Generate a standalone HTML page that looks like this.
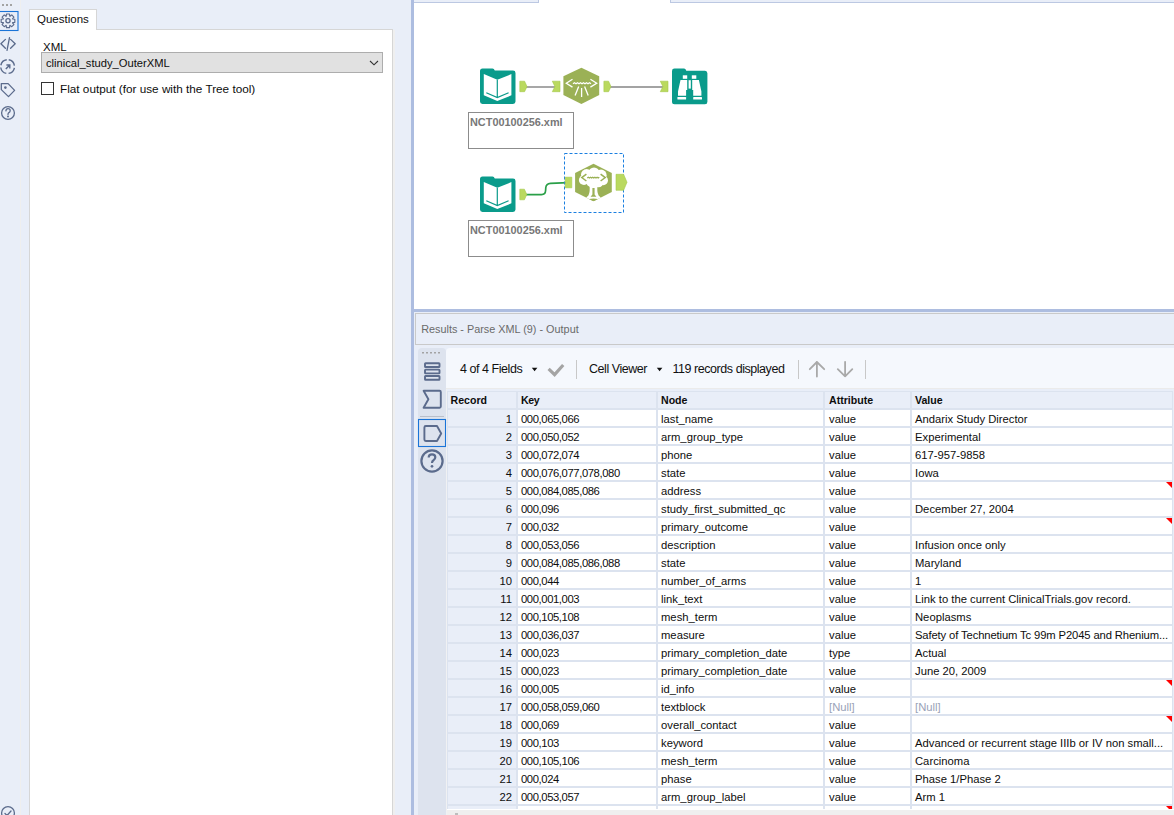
<!DOCTYPE html>
<html><head><meta charset="utf-8">
<style>
*{margin:0;padding:0;box-sizing:border-box}
html,body{width:1174px;height:815px;overflow:hidden;background:#e9eef8;font-family:"Liberation Sans",sans-serif;color:#0d0d0d}
.a{position:absolute}
.ic{position:absolute;overflow:visible}
/* left */
#lsep{left:20px;top:0;width:1px;height:815px;background:#efefef}
#panel{left:29px;top:29px;width:364px;height:800px;background:#fff;border:1px solid #d6d6d6}
#tab{left:29px;top:9px;width:68px;height:21px;background:#fff;border:1px solid #d6d6d6;border-bottom:none;font-size:11.5px;padding:3px 0 0 7px}
#xmllbl{left:43px;top:40.5px;font-size:11.5px}
#dd{left:41px;top:52px;width:342px;height:21px;background:#e1e1e1;border:1px solid #adadad;font-size:11.2px;padding:4px 0 0 4px}
#cb{left:41px;top:82px;width:13px;height:13px;border:1px solid #333;background:#fff}
#cbl{left:60px;top:82px;font-size:11.75px}
#vbar{left:411px;top:0;width:3px;height:815px;background:#adbde0}
/* canvas */
#canvas{left:414px;top:0;width:760px;height:309px;background:#fff}
#tabstrip{left:414px;top:0;width:760px;height:3px;background:#e9eef8;border-bottom:1px solid #bcc8e2}
#acttab{left:538px;top:0;width:133px;height:3px;background:#fff;border-left:1px solid #bcc8e2;border-right:1px solid #bcc8e2}
#hbar{left:414px;top:309px;width:760px;height:3px;background:#adbde0}
/* results */
#res{left:414px;top:312px;width:760px;height:503px;background:#e9eef8}
#reshdr{left:415px;top:313px;width:770px;height:32px;border:1px solid #c9c9c9;background:#e9eef8;font-size:10.85px;color:#6a6a6a;padding:9.2px 0 0 5.2px}
#side{left:418px;top:348px;width:28px;height:470px;background:#dde3ee;border-radius:4px 4px 0 0}
#tb{left:446px;top:348px;width:728px;height:41px;background:#f5f8fd;border-radius:4px 0 0 0;border-bottom:1px solid #ebebeb}
.tbt{position:absolute;font-size:12.5px;letter-spacing:-0.45px;top:361.5px;color:#111}
.sep{position:absolute;width:1px;background:#c8c8c8}
/* table */
#grid{left:447px;top:391px;width:726px;height:419px;background:#dce3ef}
.row{position:absolute;left:447px;width:725px;height:16px}
.c{position:absolute;top:0;height:16px;background:#fff;font-size:11.25px;line-height:16px;padding-top:1px;white-space:nowrap;overflow:hidden}
.hd .c{background:#e9eef8;font-weight:bold;font-size:10.6px;height:16px;line-height:16px;padding-top:0}
.c0{left:1px;width:68px;background:#e9eef8!important;text-align:right;padding-right:4px}
.c1{left:71px;width:138px;padding-left:3px;letter-spacing:-0.4px}
.c2{left:211px;width:165px;padding-left:3px}
.c3{left:378px;width:85px;padding-left:4px}
.c4{left:465px;width:260px;padding-left:3px}
.hd .c0{text-align:left;padding-left:2.5px}
.nul{color:#9aa3b8}
.red{position:absolute;right:0;top:0;width:0;height:0;border-top:6px solid #f00;border-left:6px solid transparent}
#scroll{left:447px;top:808.5px;width:727px;height:7px;background:#efefef;border-top:1.5px solid #fff}
.lbl{position:absolute;width:106px;height:37px;border:1px solid #8c8c8c;background:#fff;font-weight:bold;font-size:10.9px;color:#777;padding:3px 0 0 1px}
</style></head><body>
<!-- left icon column -->
<div class="a" id="lsep"></div>
<div class="a" id="panel"></div>
<div class="a" id="tab">Questions</div>
<div class="a" id="xmllbl">XML</div>
<div class="a" id="dd">clinical_study_OuterXML</div>
<div class="a" id="cb"></div>
<div class="a" id="cbl">Flat output (for use with the Tree tool)</div>
<div class="a" style="left:393px;top:30px;width:2px;height:785px;background:#efefef"></div>
<div class="a" id="vbar"></div>

<div class="a" id="canvas"></div>
<div class="a" id="tabstrip"></div>
<div class="a" id="acttab"></div>
<div class="a" id="hbar"></div>

<div class="a" id="res"></div>
<div class="a" id="reshdr">Results - Parse XML (9) - Output</div>
<div class="a" id="side"></div>
<div class="a" id="tb"></div>
<div class="tbt" style="left:460px">4 of 4 Fields</div>
<div class="tbt" style="left:589px">Cell Viewer</div>
<div class="tbt" style="left:672.5px">119 records displayed</div>
<div class="sep" style="left:576px;top:360px;height:19px"></div>
<div class="sep" style="left:798px;top:360px;height:19px"></div>
<div class="sep" style="left:865px;top:360px;height:19px"></div>

<div class="a" style="left:446px;top:389px;width:1px;height:426px;background:#f0f1f3"></div>
<div class="a" id="grid"></div>
<div id="rows">
<div class="row hd" style="top:392px"><div class="c c0">Record</div><div class="c c1">Key</div><div class="c c2">Node</div><div class="c c3">Attribute</div><div class="c c4">Value</div></div>
<div class="row" style="top:410px"><div class="c c0">1</div><div class="c c1">000,065,066</div><div class="c c2">last_name</div><div class="c c3">value</div><div class="c c4">Andarix Study Director</div></div>
<div class="row" style="top:428px"><div class="c c0">2</div><div class="c c1">000,050,052</div><div class="c c2">arm_group_type</div><div class="c c3">value</div><div class="c c4">Experimental</div></div>
<div class="row" style="top:446px"><div class="c c0">3</div><div class="c c1">000,072,074</div><div class="c c2">phone</div><div class="c c3">value</div><div class="c c4">617-957-9858</div></div>
<div class="row" style="top:464px"><div class="c c0">4</div><div class="c c1">000,076,077,078,080</div><div class="c c2">state</div><div class="c c3">value</div><div class="c c4">Iowa</div></div>
<div class="row" style="top:482px"><div class="c c0">5</div><div class="c c1">000,084,085,086</div><div class="c c2">address</div><div class="c c3">value</div><div class="c c4"><div class="red"></div></div></div>
<div class="row" style="top:500px"><div class="c c0">6</div><div class="c c1">000,096</div><div class="c c2">study_first_submitted_qc</div><div class="c c3">value</div><div class="c c4">December 27, 2004</div></div>
<div class="row" style="top:518px"><div class="c c0">7</div><div class="c c1">000,032</div><div class="c c2">primary_outcome</div><div class="c c3">value</div><div class="c c4"><div class="red"></div></div></div>
<div class="row" style="top:536px"><div class="c c0">8</div><div class="c c1">000,053,056</div><div class="c c2">description</div><div class="c c3">value</div><div class="c c4">Infusion once only</div></div>
<div class="row" style="top:554px"><div class="c c0">9</div><div class="c c1">000,084,085,086,088</div><div class="c c2">state</div><div class="c c3">value</div><div class="c c4">Maryland</div></div>
<div class="row" style="top:572px"><div class="c c0">10</div><div class="c c1">000,044</div><div class="c c2">number_of_arms</div><div class="c c3">value</div><div class="c c4">1</div></div>
<div class="row" style="top:590px"><div class="c c0">11</div><div class="c c1">000,001,003</div><div class="c c2">link_text</div><div class="c c3">value</div><div class="c c4">Link to the current ClinicalTrials.gov record.</div></div>
<div class="row" style="top:608px"><div class="c c0">12</div><div class="c c1">000,105,108</div><div class="c c2">mesh_term</div><div class="c c3">value</div><div class="c c4">Neoplasms</div></div>
<div class="row" style="top:626px"><div class="c c0">13</div><div class="c c1">000,036,037</div><div class="c c2">measure</div><div class="c c3">value</div><div class="c c4" style="letter-spacing:-0.13px">Safety of Technetium Tc 99m P2045 and Rhenium...</div></div>
<div class="row" style="top:644px"><div class="c c0">14</div><div class="c c1">000,023</div><div class="c c2">primary_completion_date</div><div class="c c3">type</div><div class="c c4">Actual</div></div>
<div class="row" style="top:662px"><div class="c c0">15</div><div class="c c1">000,023</div><div class="c c2">primary_completion_date</div><div class="c c3">value</div><div class="c c4">June 20, 2009</div></div>
<div class="row" style="top:680px"><div class="c c0">16</div><div class="c c1">000,005</div><div class="c c2">id_info</div><div class="c c3">value</div><div class="c c4"><div class="red"></div></div></div>
<div class="row" style="top:698px"><div class="c c0">17</div><div class="c c1">000,058,059,060</div><div class="c c2">textblock</div><div class="c c3 nul">[Null]</div><div class="c c4 nul">[Null]</div></div>
<div class="row" style="top:716px"><div class="c c0">18</div><div class="c c1">000,069</div><div class="c c2">overall_contact</div><div class="c c3">value</div><div class="c c4"><div class="red"></div></div></div>
<div class="row" style="top:734px"><div class="c c0">19</div><div class="c c1">000,103</div><div class="c c2">keyword</div><div class="c c3">value</div><div class="c c4">Advanced or recurrent stage IIIb or IV non small...</div></div>
<div class="row" style="top:752px"><div class="c c0">20</div><div class="c c1">000,105,106</div><div class="c c2">mesh_term</div><div class="c c3">value</div><div class="c c4">Carcinoma</div></div>
<div class="row" style="top:770px"><div class="c c0">21</div><div class="c c1">000,024</div><div class="c c2">phase</div><div class="c c3">value</div><div class="c c4">Phase 1/Phase 2</div></div>
<div class="row" style="top:788px"><div class="c c0">22</div><div class="c c1">000,053,057</div><div class="c c2">arm_group_label</div><div class="c c3">value</div><div class="c c4">Arm 1</div></div>
<div class="row" style="top:806px;height:2.5px;overflow:hidden"><div class="c c0"></div><div class="c c1"></div><div class="c c2"></div><div class="c c3"></div><div class="c c4"><div class="red"></div></div></div>
</div><!--/rows-->
<div class="a" id="scroll"></div>
<div class="a" style="left:455px;top:813px;width:3px;height:2px;background:#bdbdbd"></div>
<div class="lbl" style="left:468px;top:112px">NCT00100256.xml</div>
<div class="lbl" style="left:468px;top:220px">NCT00100256.xml</div>
<svg class="a" width="12" height="8" style="left:369px;top:59px"><path d="M1 2 L5 5.8 L9 2" fill="none" stroke="#333" stroke-width="1.1"/></svg>

<svg class="a" id="ov" width="1174" height="815" viewBox="0 0 1174 815" style="left:0;top:0;pointer-events:none">
<!-- left column icons -->
<g fill="#a3a3a3"><rect x="2" y="4" width="2" height="2"/><rect x="6" y="4" width="2" height="2"/><rect x="10" y="4" width="2" height="2"/></g>
<rect x="-1.5" y="11.5" width="19.5" height="19" fill="none" stroke="#1a74d8" stroke-width="1.1"/>
<g fill="none" stroke="#5b6b8c" stroke-width="1.3" stroke-linecap="round" stroke-linejoin="round">
<path d="M12.68 19.04 L14.83 19.27 L14.83 22.33 L12.68 22.56 L12.55 22.86 L13.91 24.55 L11.75 26.71 L10.06 25.35 L9.76 25.48 L9.53 27.63 L6.47 27.63 L6.24 25.48 L5.94 25.35 L4.25 26.71 L2.09 24.55 L3.45 22.86 L3.32 22.56 L1.17 22.33 L1.17 19.27 L3.32 19.04 L3.45 18.74 L2.09 17.05 L4.25 14.89 L5.94 16.25 L6.24 16.12 L6.47 13.97 L9.53 13.97 L9.76 16.12 L10.06 16.25 L11.75 14.89 L13.91 17.05 L12.55 18.74 Z" stroke-width="1.15"/>
<circle cx="8" cy="20.8" r="2.1"/>
<path d="M5.4 39.4 L0.9 43.8 L5.4 48.3 M10.6 39.4 L15.2 43.8 L10.6 48.3 M9.5 37.6 L7 50.3"/>
<path d="M1.3 83.6 H8.1 L14.6 90.4 L8.5 96.6 L1.3 89.6 Z"/>
<circle cx="8" cy="113" r="6.4"/>
<path d="M5.9 110.9 Q6 108.6 8 108.6 Q10.2 108.6 10.2 110.7 Q10.2 112 8.6 112.8 Q8 113.2 8 114.6"/>
<circle cx="8" cy="813" r="6.4"/>
<path d="M5 813.5 L7 815.5 L11 811"/>
</g>
<g fill="none" stroke="#5b6b8c" stroke-width="1.4" stroke-dasharray="8.5 2.34" stroke-dashoffset="9.67">
<circle cx="7.6" cy="66.6" r="6.9" transform="rotate(-90 7.6 66.6)"/>
</g>
<g fill="#5b6b8c"><circle cx="5.4" cy="87.6" r="1.3"/><circle cx="8" cy="116.6" r="1"/></g>
<g fill="none" stroke="#5b6b8c" stroke-width="1.4"><path d="M5.8 69.1 L9.6 65.2 M6.4 65 H9.8 V68.4"/></g>

<!-- results side toolbar icons -->
<g fill="#a3a3a3"><rect x="422" y="352" width="2" height="1.5"/><rect x="426" y="352" width="2" height="1.5"/><rect x="430" y="352" width="2" height="1.5"/><rect x="434" y="352" width="2" height="1.5"/><rect x="438" y="352" width="2" height="1.5"/></g>
<g fill="none" stroke="#5b6b8c" stroke-width="1.9" stroke-linejoin="round">
<rect x="425" y="363.2" width="14.5" height="3.8" rx="0.6" stroke-width="1.9"/>
<rect x="425" y="369.6" width="14.5" height="3.8" rx="0.6" stroke-width="1.9"/>
<rect x="425" y="376" width="14.5" height="3.8" rx="0.6" stroke-width="1.9"/>
<path d="M423.6 390.8 H439.6 Q440.8 390.8 440.8 392 V406.6 Q440.8 407.8 439.6 407.8 H423.6 L428.4 399.3 Z"/>
<path d="M424.4 427.4 Q424.4 426 425.8 426 H437 L441.2 433.5 L437 441 H425.8 Q424.4 441 424.4 439.6 Z"/>
<circle cx="432" cy="461" r="10.6" stroke-width="2.2"/>
<path d="M428.7 457.6 Q428.7 454.4 432 454.4 Q435.3 454.4 435.3 457.3 Q435.3 459.2 433.5 460.2 Q432 461 432 463" stroke-width="2.2"/>
</g>
<circle cx="432" cy="466.3" r="1.35" fill="#5b6b8c"/>
<rect x="420" y="416" width="24" height="1" fill="#b9bfca"/>
<rect x="418.5" y="419.5" width="27" height="27" fill="none" stroke="#1a74d8" stroke-width="1.1"/>

<!-- toolbar icons -->
<path d="M531.8 367.8 H537.4 L534.6 371.2 Z" fill="#111"/>
<path d="M656.8 367.8 H662.4 L659.6 371.2 Z" fill="#111"/>
<path d="M548.6 368.8 L554.6 374.6 L563.2 365" fill="none" stroke="#a4a4a4" stroke-width="3.2" stroke-linejoin="miter"/>
<g fill="none" stroke="#a9a9a9" stroke-width="1.8" stroke-linecap="round" stroke-linejoin="round">
<path d="M816.9 376.5 V362 M809.8 369.2 L816.9 362 L824.2 369.2"/>
<path d="M845.1 361.8 V376.3 M837.8 369.1 L845.1 376.3 L852.3 369.1"/>
</g>

<!-- canvas: connections -->
<g fill="none" stroke="#a3a3a3" stroke-width="1.9"><path d="M526 87 H555"/><path d="M610 87 H663"/></g>
<path d="M526 194.6 H541.5 Q545.4 194.6 545.6 190.5 L545.8 187.5 Q546.2 183.6 550.5 183.3 L568 182.6" fill="none" stroke="#2a9f48" stroke-width="1.7"/>

<!-- tool: book 1 -->
<g>
<path d="M480 71 Q480 68.5 482.5 68.5 H492.5 Q494 68.5 494.8 70.6 H513 Q515.5 70.6 515.5 73 V101.6 Q515.5 104 513 104 H482.5 Q480 104 480 101.6 Z" fill="#0a9b8b"/>
<path d="M483.8 74.1 L497.3 79.7 L511.4 74.1 V95.3 L497.3 101.1 L483.8 95.3 Z" fill="#fff"/>
<path d="M497.3 79.7 V97.3 M486.3 92.8 L497.3 97.5 L508.6 92.8" fill="none" stroke="#0a9b8b" stroke-width="1.2"/>
</g>
<g transform="translate(0 108)">
<path d="M480 71 Q480 68.5 482.5 68.5 H492.5 Q494 68.5 494.8 70.6 H513 Q515.5 70.6 515.5 73 V101.6 Q515.5 104 513 104 H482.5 Q480 104 480 101.6 Z" fill="#0a9b8b"/>
<path d="M483.8 74.1 L497.3 79.7 L511.4 74.1 V95.3 L497.3 101.1 L483.8 95.3 Z" fill="#fff"/>
<path d="M497.3 79.7 V97.3 M486.3 92.8 L497.3 97.5 L508.6 92.8" fill="none" stroke="#0a9b8b" stroke-width="1.2"/>
</g>

<!-- tool: browse -->
<path d="M672 71 Q672 68.6 674.5 68.6 H684 Q685.6 68.6 686.3 70.7 H705 Q707.4 70.7 707.4 73.2 V101.7 Q707.4 104.2 705 104.2 H674.5 Q672 104.2 672 101.7 Z" fill="#0a9b8b"/>
<g fill="#fff">
<rect x="682.8" y="75.3" width="4.4" height="3.5"/><rect x="691.8" y="75.3" width="4.5" height="3.5"/>
<rect x="688.6" y="80.2" width="2.2" height="8.4"/>
<path d="M680.5 80 H687.2 V89.9 H686.1 V95.7 H678 V91.5 Z"/>
<path d="M698.9 80 H692.2 V89.9 H693.2 V95.7 H701.4 V91.5 Z"/>
<rect x="677.4" y="96.9" width="8.7" height="2.7" rx="0.6"/><rect x="693.2" y="96.9" width="8.8" height="2.7" rx="0.6"/>
</g>

<!-- tool: parse xml 1 -->
<path d="M581.4 67.8 L599.2 76.3 V95 L581.4 103.9 L563.4 95 V76.3 Z" fill="#9bb156"/>
<g fill="none" stroke="#fff" stroke-width="1.3">
<path d="M572.5 79.3 L566.3 83.2 L572.5 87.1 M590.4 79.3 L596.7 83.2 L590.4 87.1"/>
<path d="M573 83.8 l1.5 -1 l1.5 1 l1.5 -1 l1.5 1 l1.5 -1 l1.5 1 l1.5 -1 l1.5 1 l1.5 -1 l1.5 1 l1.5 -1 l1.5 1"/>
<path d="M578.7 86.6 L575.1 95.6 M581.6 88 V97 M584.6 86.6 L588.2 95.6"/>
</g>

<!-- tool: parse xml 2 (tree) -->
<clipPath id="hx"><path d="M593.5 163.8 L611.8 173.1 V191.9 L593.5 201.2 L575.1 191.9 V173.1 Z"/></clipPath>
<path d="M593.5 163.8 L611.8 173.1 V191.9 L593.5 201.2 L575.1 191.9 V173.1 Z" fill="#9bb156"/>
<g clip-path="url(#hx)">
<g fill="#fff">
<circle cx="586.6" cy="174.6" r="5.6"/><circle cx="594" cy="173" r="5.6"/><circle cx="601" cy="175.2" r="5.6"/>
<circle cx="584" cy="180" r="5.1"/><circle cx="603.2" cy="180.4" r="4.8"/><circle cx="592" cy="181" r="6.2"/><circle cx="598.4" cy="182" r="5.2"/>
<path d="M589.4 185 H597.6 Q596.6 191.6 598.6 195.6 Q601.4 197.6 601.4 199.5 H585.6 Q585.6 197.6 588.4 195.6 Q590.4 191.6 589.4 185 Z"/>
</g>
<g fill="none" stroke="#9bb156" stroke-width="1.2">
<path d="M586.4 174.2 L581.8 177.6 L586.4 181 M600.6 174.2 L605.2 177.6 L600.6 181" stroke-width="1.5"/>
<path d="M587.2 178 l1.1 -0.8 l1.1 0.8 l1.1 -0.8 l1.1 0.8 l1.1 -0.8 l1.1 0.8 l1.1 -0.8 l1.1 0.8 l1.1 -0.8 l1.1 0.8 l1.1 -0.8"/>
</g>
<path d="M592.4 188 H594.6 V194.4 L596.4 196.8 H590.6 L592.4 194.4 Z" fill="#9bb156"/>
<path d="M585 201 Q593.5 196.2 602 201 Z" fill="#9bb156"/>
</g>

<!-- anchors -->
<rect x="564.5" y="153.5" width="59" height="59" fill="none" stroke="#1a7fe0" stroke-width="1" stroke-dasharray="3 2"/>

<g fill="#bad95f" stroke="#a5c94a" stroke-width="0.6">
<path d="M519.8 81.2 H524.6 L527 86.6 L524.6 91.7 H519.8 Z"/>
<path d="M552.3 81.2 H560 V91.7 H552.3 L554.9 86.5 Z"/>
<path d="M603.9 81.2 H608.6 L611 86.6 L608.6 91.7 H603.9 Z"/>
<path d="M660.3 81.2 H668 V91.7 H660.3 L662.9 86.5 Z"/>
<path d="M519.8 189.2 H524.4 L526.8 194.6 L524.4 199.8 H519.8 Z"/>
<path d="M565.2 177.2 H571.8 V187.8 H565.2 Z"/>
<path d="M616 174.3 H623.6 L627 182.3 L623.6 190.3 H616 Z"/>
</g>
</svg>

</body></html>
